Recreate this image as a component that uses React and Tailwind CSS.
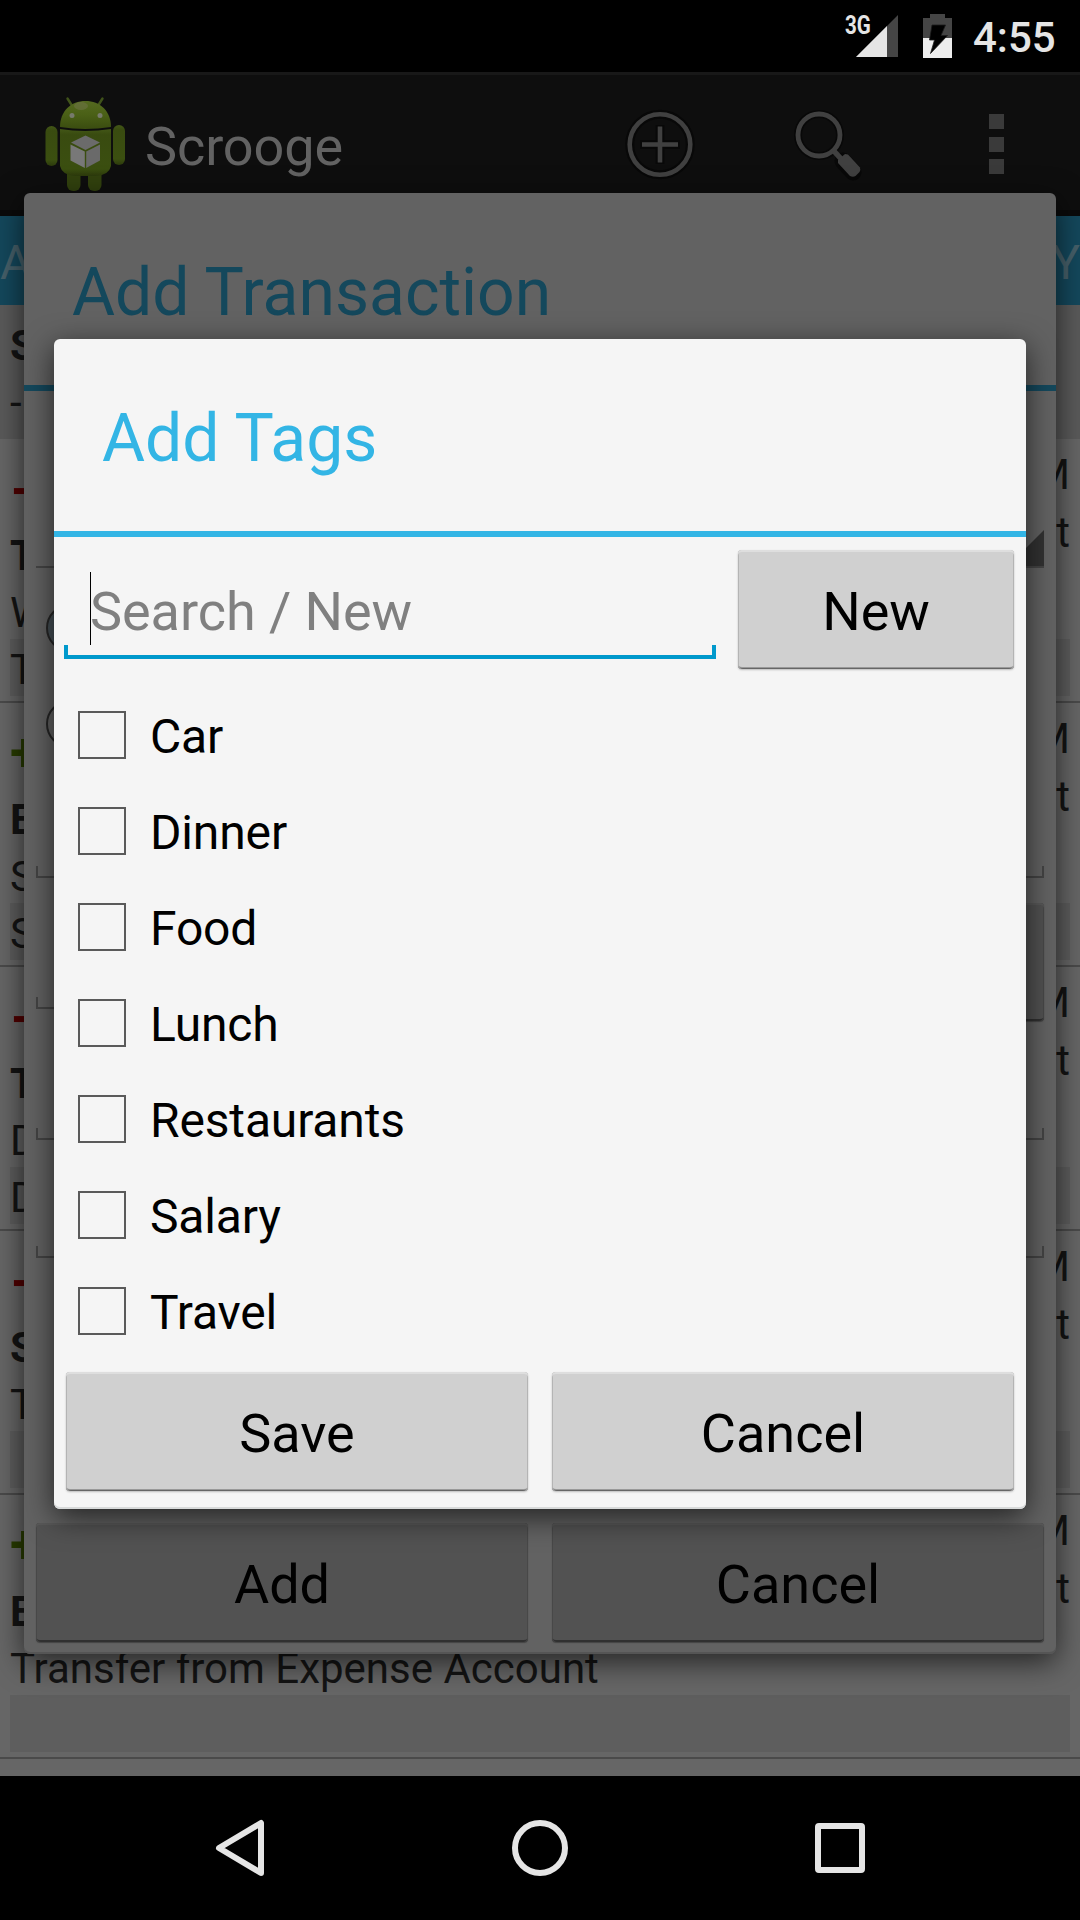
import React from "react";

const TAGS = ["Car", "Dinner", "Food", "Lunch", "Restaurants", "Salary", "Travel"];

const ROWS = [
  { sign: "−", title: "T", note: "W", tag: "T" },
  { sign: "+", title: "E", note: "S", tag: "S" },
  { sign: "−", title: "T", note: "D", tag: "D" },
  { sign: "−", title: "S", note: "T", tag: "" },
  { sign: "+", title: "E", note: "Transfer from Expense Account", tag: "" },
];

function StatusBar() {
  return (
    <div className="flex h-[72px] shrink-0 items-start bg-black text-[#e5e5e5]">
      <span className="ml-[845px] mt-[10px] w-[11px] origin-left scale-x-[0.79] whitespace-nowrap text-[26px] font-bold leading-[30px]">
        3G
      </span>
      <svg className="mt-[14px] h-[44px] w-[42px] shrink-0" viewBox="0 0 42 44">
        <path d="M42 1V43H0Z" fill="#454545" />
        <path d="M31 12V43H0Z" fill="#e5e5e5" />
      </svg>
      <svg className="ml-[25px] mt-[14px] h-[44px] w-[29px] shrink-0" viewBox="0 0 29 44">
        <path d="M7 0H22V4H29V24H0V4H7Z" fill="#454545" />
        <path d="M0 24H29V44H0Z" fill="#ededed" />
        <path d="M9 11H22.5L18 21.5H24.5L7.5 39.5L11.5 26H6.5Z" fill="#000" stroke="#1c1c1c" strokeWidth="0.8" />
      </svg>
      <span className="ml-[21px] mt-[9px] text-[42px] font-medium leading-[57px]">4:55</span>
    </div>
  );
}

function Robot() {
  return (
    <svg className="h-[96px] w-[82px] shrink-0" viewBox="0 0 82 96">
      <defs>
        <linearGradient id="head" x1="0" y1="0" x2="0" y2="1">
          <stop offset="0" stopColor="#556a20" />
          <stop offset="0.5" stopColor="#4a6016" />
          <stop offset="1" stopColor="#3a4c10" />
        </linearGradient>
        <linearGradient id="torso" x1="0" y1="0" x2="0" y2="1">
          <stop offset="0" stopColor="#435717" />
          <stop offset="0.12" stopColor="#394b10" />
          <stop offset="0.85" stopColor="#3b4f10" />
          <stop offset="1" stopColor="#2c3a0c" />
        </linearGradient>
      </defs>
      <path d="M23.500 2.500l5 8M58.500 2.500l-5 8" stroke="#40531a" strokeWidth="2.400" strokeLinecap="round" />
      <path d="M16 31C16 15 27 5 41.500 5S67 15 67 31Q41 35 16 31Z" fill="url(#head)" />
      <ellipse cx="37" cy="10" rx="7" ry="4" fill="#6d7345" opacity="0.6" />
      <circle cx="28" cy="19.500" r="2.500" fill="#777a6c" />
      <circle cx="56" cy="19.500" r="2.500" fill="#777a6c" />
      <rect x="23" y="70" width="13.500" height="25" rx="6" fill="#32420e" />
      <rect x="44" y="70" width="13.500" height="25" rx="6" fill="#32420e" />
      <path d="M16 33Q41 37 67 33V70Q65 79 52 80H31Q18 79 16 70Z" fill="url(#torso)" />
      <rect x="1.500" y="30" width="12" height="40" rx="6" fill="url(#torso)" />
      <rect x="69" y="29" width="12" height="40" rx="6" fill="url(#torso)" />
      <path d="M41.500 39.500L56 46.500L41.500 54L27 46.500Z" fill="#6b6b6b" />
      <path d="M26.500 48.500L40.800 55.500V72L26.500 64.500Z" fill="#787878" />
      <path d="M56 48.500L42.200 55.500V72L56 64.500Z" fill="#6a6a6a" />
    </svg>
  );
}

function ActionBar() {
  return (
    <div className="flex h-[144px] shrink-0 items-start border-b-[6px] border-t-[3px] border-b-[#0a0a0a] border-t-[#181818] bg-[#0e0e0e]">
      <div className="ml-[44px] mt-[21px]">
        <Robot />
      </div>
      <span className="ml-[19px] mt-[40px] w-[200px] text-[54px] leading-[63px] tracking-[-0.1px] text-[#626262]">Scrooge</span>
      <svg className="ml-[277px] mt-[31px] h-[76px] w-[76px]" viewBox="0 0 76 76" fill="none">
        <g stroke="#080808" strokeWidth="9">
          <circle cx="38" cy="38.500" r="30.300" />
          <path d="M38 19V58M18 38.500H58" />
        </g>
        <g stroke="#404040" strokeWidth="4.600">
          <circle cx="38" cy="38.500" r="30.300" />
          <path d="M38 20.500V56.500M20 38.500H56" />
        </g>
      </svg>
      <svg className="ml-[92px] mt-[31px] h-[76px] w-[76px]" viewBox="0 0 76 76" fill="none">
        <g stroke="#080808">
          <circle cx="29" cy="29" r="21" strokeWidth="8" />
          <path d="M53 55L63 66" strokeWidth="17" strokeLinecap="round" />
        </g>
        <circle cx="29" cy="29" r="21" stroke="#404040" strokeWidth="4.800" />
        <path d="M43 44L53 55" stroke="#404040" strokeWidth="5.500" />
        <path
          d="M48 54L55 48L58 48.500L70 61.500Q71 64 69.500 66L65.500 70Q63 71.500 60 70L48 57Z"
          fill="#404040"
        />
      </svg>
      <div className="ml-[123px] mt-[39px] flex flex-col gap-[7.500px]">
        <i className="h-[15px] w-[15px] bg-[#3a3a3a]" />
        <i className="h-[15px] w-[15px] bg-[#3a3a3a]" />
        <i className="h-[15px] w-[15px] bg-[#3a3a3a]" />
      </div>
    </div>
  );
}

function Transaction({ row }) {
  return (
    <div className="h-[264px] shrink-0 border-b-2 border-[#4a4a4a] text-[42px] text-[#141414]">
      <div className="flex h-[200px] justify-between pl-[10px] pr-[10px]">
        <div>
          <div
            className={
              row.sign === "−"
                ? "h-[88px] pt-[15px] text-[54px] font-bold leading-[76px] text-[#520000]"
                : "h-[88px] pt-[12px] text-[54px] font-bold leading-[76px] text-[#293d00]"
            }
          >
            {row.sign}
          </div>
          <div className="h-[57px] font-bold leading-[57px]">{row.title}</div>
          <div className="h-[55px] leading-[57px]">{row.note}</div>
        </div>
        <div className="pt-[7px] text-right leading-[57px]">
          <div>M</div>
          <div className="pt-px">t</div>
        </div>
      </div>
      <div className="mx-[10px] h-[57px] bg-[#5e5e5e] pt-[3px] leading-[55px] tracking-[-0.05px]">{row.tag}</div>
    </div>
  );
}

function Field({ both }) {
  return (
    <div
      className={
        both
          ? "h-[12px] border-b-2 border-[#444] bg-[linear-gradient(#444,#444),linear-gradient(#444,#444)] bg-[length:2px_100%] bg-[position:left,right] bg-no-repeat"
          : "h-[12px] w-[700px] border-b-2 border-l-2 border-[#444]"
      }
    />
  );
}

function DimButton({ children }) {
  return (
    <div className="flex-1 rounded-[4px] bg-[#525252] text-center text-[54px] leading-[123px] text-black shadow-[inset_0_2px_0_#595959,inset_1px_0_0_#484848,inset_-1px_0_0_#484848,inset_0_-2px_0_#303030,0_1px_1px_#444]">
      {children}
    </div>
  );
}

function LightButton({ className, children }) {
  return (
    <div
      className={
        "h-[119px] rounded-[4px] bg-[#d0d0d0] text-center text-[54px] leading-[123px] text-black shadow-[inset_0_2px_0_#dedede,inset_1px_0_0_#b4b4b4,inset_-1px_0_0_#b4b4b4,inset_0_-1px_0_#666,inset_0_-2px_0_#999,0_1px_2px_#bbb] " +
        className
      }
    >
      {children}
    </div>
  );
}

function TransactionDialog() {
  return (
    <div className="absolute left-[24px] top-[193px] flex h-[1461px] w-[1032px] flex-col rounded-[6px] bg-[#626262] shadow-[inset_0_-2px_0_#555,0_8px_30px_rgba(0,0,0,0.65)]">
      <div className="h-[198px] border-b-[6px] border-[#14485c] pl-[48px] pt-[61px] text-[66px] leading-[78px] text-[#14485c]">
        Add Transaction
      </div>
      <div className="flex flex-1 flex-col px-[12px]">
        <div className="mt-[139px] flex h-[38px] justify-end border-b-2 border-[#454545]">
          <svg className="h-[36px] w-[36px]" viewBox="0 0 36 36">
            <path d="M36 0V36H0Z" fill="#323232" />
          </svg>
        </div>
        <div className="ml-[10px] mt-[36px] h-[48px] w-[48px] rounded-full border-2 border-[#262626] bg-[#465056]" />
        <div className="ml-[10px] mt-[48px] h-[48px] w-[48px] rounded-full border-2 border-[#262626]" />
        <div className="mt-[118px]">
          <Field both />
        </div>
        <div className="mt-[25px] flex h-[118px] items-end justify-between">
          <div className="mb-[12px]">
            <Field />
          </div>
          <div className="flex h-[118px] w-[276px]">
            <DimButton />
          </div>
        </div>
        <div className="mt-[107px]">
          <Field both />
        </div>
        <div className="mt-[106px]">
          <Field both />
        </div>
        <div className="mb-[12px] mt-auto flex h-[119px] gap-6">
          <DimButton>Add</DimButton>
          <DimButton>Cancel</DimButton>
        </div>
      </div>
    </div>
  );
}

function TagsDialog() {
  return (
    <div className="absolute left-[54px] top-[339px] flex h-[1170px] w-[972px] flex-col rounded-[6px] bg-[#f5f5f5] shadow-[inset_0_-2px_0_#d8dada,0_8px_30px_rgba(0,0,0,0.65)]">
      <div className="h-[198px] border-b-[6px] border-[#33b5e5] pl-[48px] pt-[61px] text-[66px] leading-[78px] text-[#33b5e5]">
        Add Tags
      </div>
      <div className="flex h-[150px] items-start pl-[10px] pr-[12px] pt-[13px]">
        <div className="mr-[22px] flex h-[109px] flex-1 flex-col justify-end bg-[linear-gradient(#0099cc,#0099cc),linear-gradient(#0099cc,#0099cc)] bg-[length:4px_14px] bg-[position:left_bottom,right_bottom] bg-no-repeat">
          <div className="flex h-[105px] items-start pl-[26px] pt-[22px]">
            <i className="h-[73px] w-px bg-black" />
            <span className="-ml-px text-[54px] leading-[80px] tracking-[-0.05px] text-[#808080]">Search / New</span>
          </div>
          <div className="h-[4px] bg-[#0099cc]" />
        </div>
        <LightButton className="w-[276px]">New</LightButton>
      </div>
      <div className="flex flex-col">
        {TAGS.map((tag) => (
          <div key={tag} className="flex h-24 items-center pl-6">
            <span className="h-[48px] w-[48px] border-2 border-[#5a5a5a]" />
            <span className="ml-6 pt-[4px] text-[48px] leading-[58px] tracking-[-0.15px] text-black">{tag}</span>
          </div>
        ))}
      </div>
      <div className="mb-[18px] mt-auto flex gap-6 px-[12px]">
        <LightButton className="flex-1">Save</LightButton>
        <LightButton className="flex-1">Cancel</LightButton>
      </div>
    </div>
  );
}

function NavBar() {
  return (
    <div className="flex h-[144px] shrink-0 items-center bg-black pl-[210px]">
      <svg className="h-[60px] w-[60px]" viewBox="0 0 60 60" fill="none" stroke="#e5e5e5" strokeWidth="6" strokeLinejoin="round">
        <path d="M51 5V55L9 30Z" />
      </svg>
      <span className="ml-[242px] h-[56px] w-[56px] rounded-full border-[6px] border-[#e5e5e5]" />
      <span className="ml-[247px] h-[50px] w-[50px] rounded-[4px] border-[6px] border-[#e5e5e5]" />
    </div>
  );
}

export default function App() {
  return (
    <div className="relative flex h-[1920px] w-[1080px] flex-col overflow-hidden bg-[#666] font-['Roboto',sans-serif]">
      <StatusBar />
      <ActionBar />
      <div className="flex h-[89px] shrink-0 justify-between bg-[#14485c] pt-[18px] text-[48px] leading-[58px] text-[#46606a]">
        <span>A</span>
        <span>Y</span>
      </div>
      <div className="h-[134px] shrink-0 bg-[#5a5a5a] pl-[10px] pt-[12px] text-[42px] leading-[57px] text-[#141414]">
        <div className="font-bold">S</div>
        <div>-</div>
      </div>
      {ROWS.map((row, i) => (
        <Transaction key={i} row={row} />
      ))}
      <div className="flex-1" />
      <NavBar />
      <TransactionDialog />
      <TagsDialog />
    </div>
  );
}
